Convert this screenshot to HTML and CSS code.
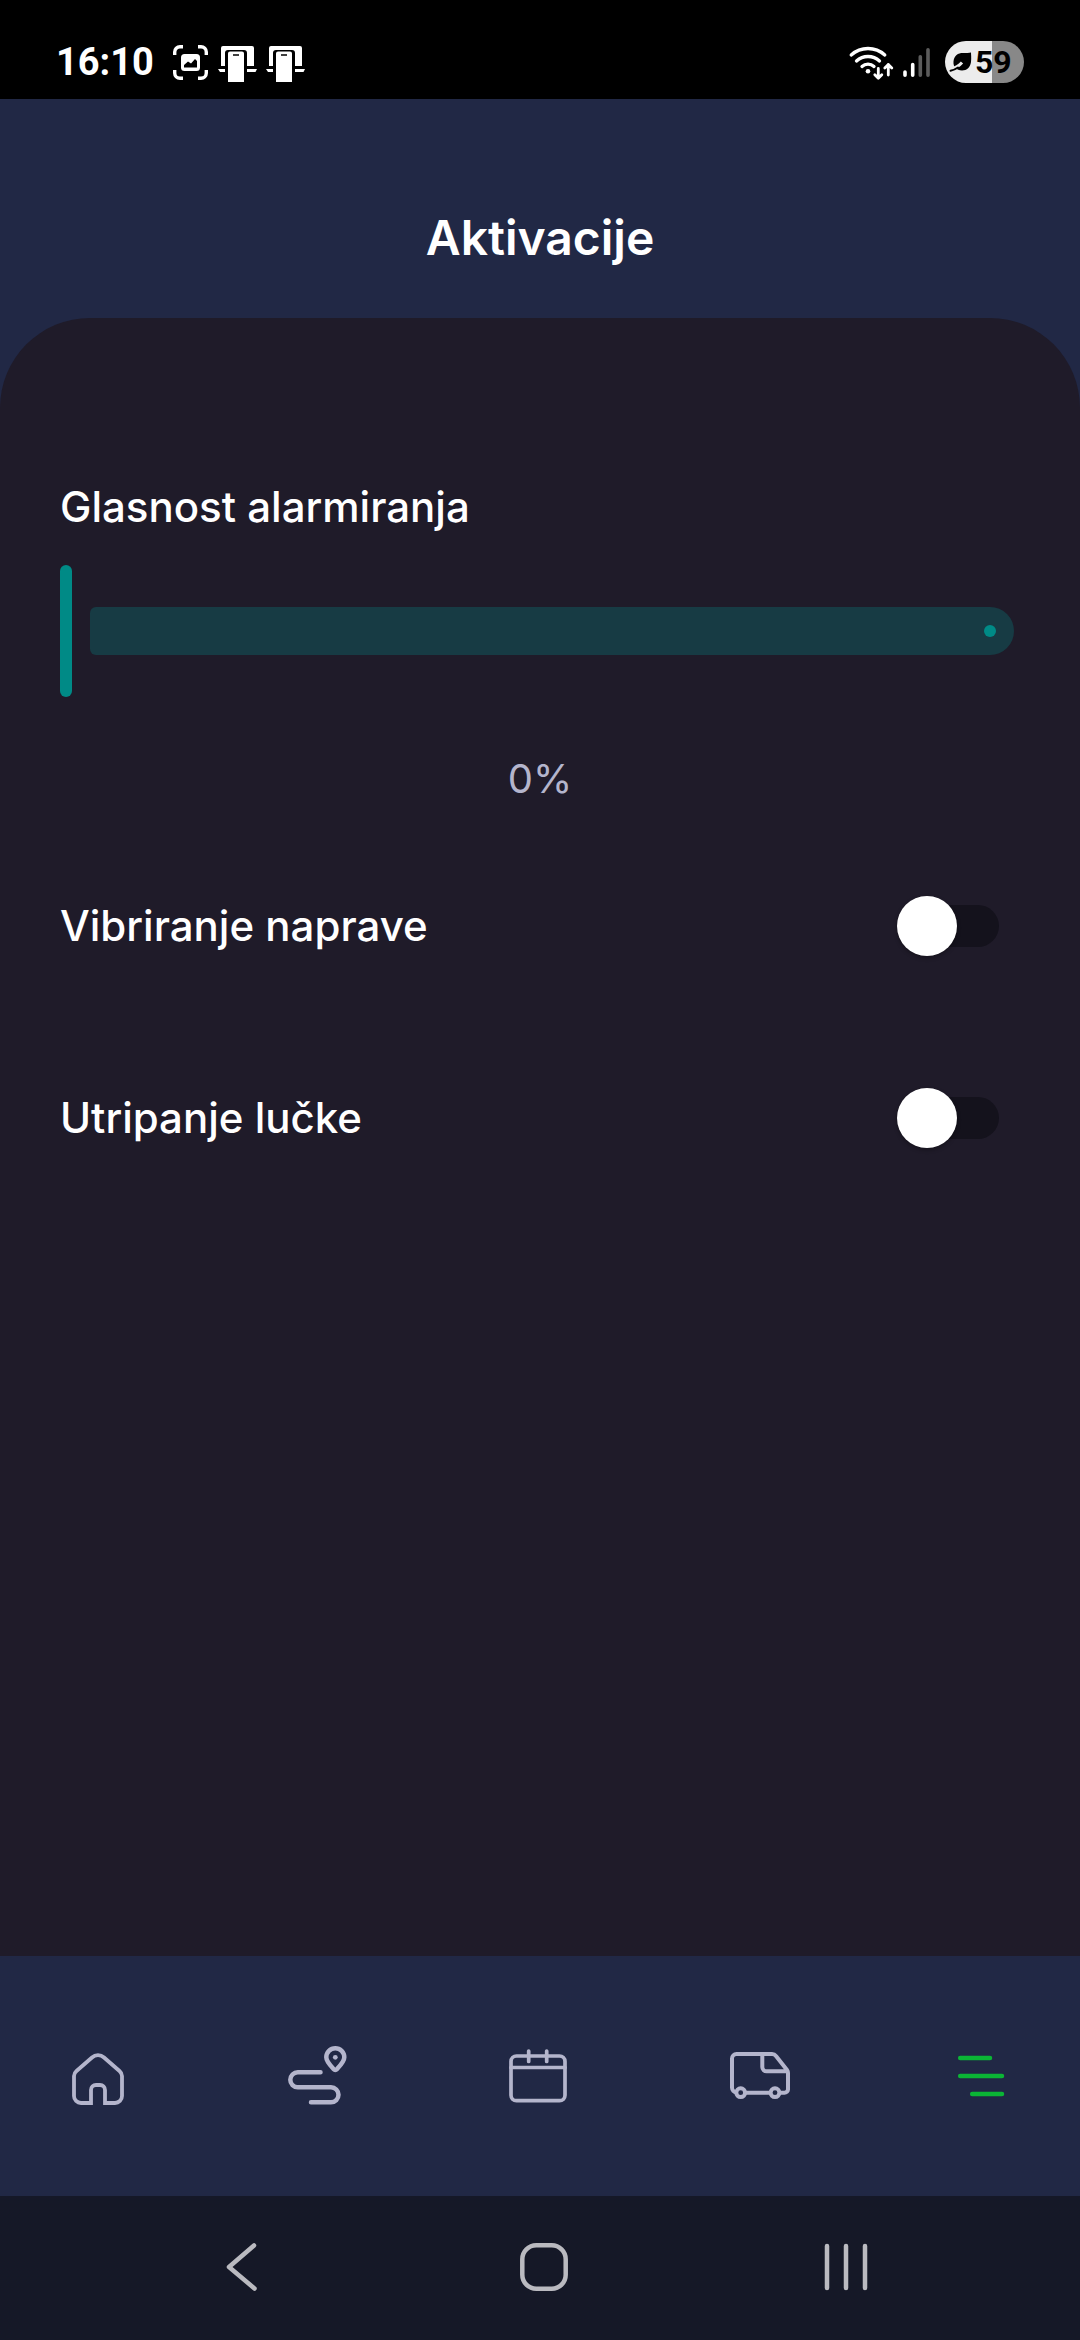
FILE: index.html
```html
<!DOCTYPE html>
<html lang="sl">
<head>
<meta charset="utf-8">
<meta name="viewport" content="width=device-width, initial-scale=1">
<title>Aktivacije</title>
<link rel="stylesheet" href="styles.css">
</head>
<body>
<div class="status-bar">
  <div class="status-left">
    <span class="clock">16:10</span>
    <svg class="status-icon" width="38" height="44" viewBox="0 0 38 44" aria-hidden="true">
      <g fill="none" stroke="#fff" stroke-width="3.4">
        <path d="M2.7 15V12a5.3 5.3 0 0 1 5.3-5.3h3M26 6.700h3a5.300 5.300 0 0 1 5.300 5.300v3M34.300 30v3a5.300 5.300 0 0 1-5.300 5.300h-3M11 38.300H8a5.300 5.300 0 0 1-5.300-5.300v-3"/>
      </g>
      <rect x="9" y="14" width="19" height="17" rx="3.500" fill="#fff"/>
      <path d="M12 27.500v-2.500l4-3.500 3 2 4-4.500 2 2v6.500z" fill="#000"/>
    </svg>
    <svg class="status-icon" width="40" height="44" viewBox="0 0 40 44" aria-hidden="true">
      <path d="M3 26V8a2 2 0 0 1 2-2h29a2 2 0 0 1 2 2v18h-7V13a3 3 0 0 0-3-3H10a3 3 0 0 0-3 3v13zM0 29h7v3H2zM29 29h10l-1.500 3H29zM10 13.500a2 2 0 0 1 2-2h12a2 2 0 0 1 2 2V42H10z" fill="#fff"/>
      <path d="M15 15h6" stroke="#000" stroke-width="1.500"/>
    </svg>
    <svg class="status-icon" width="40" height="44" viewBox="0 0 40 44" aria-hidden="true">
      <path d="M3 26V8a2 2 0 0 1 2-2h29a2 2 0 0 1 2 2v18h-7V13a3 3 0 0 0-3-3H10a3 3 0 0 0-3 3v13zM0 29h7v3H2zM29 29h10l-1.500 3H29zM10 13.500a2 2 0 0 1 2-2h12a2 2 0 0 1 2 2V42H10z" fill="#fff"/>
      <path d="M15 15h6" stroke="#000" stroke-width="1.500"/>
    </svg>
  </div>
  <div class="status-right">
    <svg class="status-icon" width="48" height="44" viewBox="0 0 48 44" aria-hidden="true">
      <g fill="none" stroke="#fff" stroke-width="3.300" stroke-linecap="round">
        <path d="M3.200 15a25 25 0 0 1 33.600 0M8.500 21a17 17 0 0 1 23 0M14 26.500a9 9 0 0 1 12 0"/>
      </g>
      <circle cx="20" cy="31.300" r="2.300" fill="#fff"/>
      <g fill="none" stroke-linecap="round" stroke-linejoin="round">
        <path d="M30.300 30v8" stroke="#000" stroke-width="6"/>
        <path d="M30.300 28.500v9.500M26.800 34.800l3.500 3.500 3.500-3.500M40.300 35V24.500M36.800 28l3.500-3.500 3.500 3.500" stroke="#fff" stroke-width="2.800"/>
      </g>
    </svg>
    <svg class="status-icon signal" width="32" height="44" viewBox="0 0 32 44" aria-hidden="true">
      <g stroke-width="3.600" stroke-linecap="round">
        <path d="M5 32v3.300M12.700 24.500v10.800" stroke="#fff"/>
        <path d="M20.300 16.800v18.500M28 9.800v25.500" stroke="#5c5c5c"/>
      </g>
    </svg>
    <div class="battery">
      <svg width="24" height="24" viewBox="0 0 24 24" aria-hidden="true">
        <path d="M22 2.500c0 2 .500 5 0 9.500-.700 5-4 8.500-9 8.500-5.500 0-9-3.500-8.500-9C5 5.500 9 3 14 3c3.500 0 6 0 8-.500z" fill="#000"/>
        <path d="M13 12.500C9.500 16.500 6 18 1.500 19.500" fill="none" stroke="#ececec" stroke-width="3"/>
        <path d="M9 17.500C6.500 19.200 4 20.300 1.500 20.800" fill="none" stroke="#000" stroke-width="2" stroke-linecap="round"/>
      </svg>
      <span>59</span>
    </div>
  </div>
</div>

<header class="header"><h1>Aktivacije</h1></header>

<main class="sheet">
  <label class="label" for="volume">Glasnost alarmiranja</label>
  <div class="slider">
    <span class="slider-track"></span>
    <input id="volume" type="range" min="0" max="100" value="0">
  </div>
  <output class="value" for="volume">0%</output>
  <div class="row">
    <label class="label" for="vibration">Vibriranje naprave</label>
    <input class="switch" id="vibration" type="checkbox" role="switch">
  </div>
  <div class="row">
    <label class="label" for="flash">Utripanje lučke</label>
    <input class="switch" id="flash" type="checkbox" role="switch">
  </div>
</main>

<nav class="tabs" aria-label="Meni">
  <a href="#home" aria-label="Domov">
    <svg viewBox="0 0 72 72" stroke-width="3.800"><path d="M29 63H19a7 7 0 0 1-7-7V36a7 7 0 0 1 2.500-5L30 17.500a9 9 0 0 1 12 0L57.500 31a7 7 0 0 1 2.500 5v20a7 7 0 0 1-7 7H43V50a5 5 0 0 0-5-5h-4a5 5 0 0 0-5 5z"/></svg>
  </a>
  <a href="#route" aria-label="Pot">
    <svg viewBox="0 0 72 72" stroke-width="4.500" stroke-linecap="round"><path d="M37.500 32.300H14.800a7.500 7.500 0 0 0 0 15H48a7.500 7.500 0 0 1 0 15H28M43.300 17.300a9 9 0 0 1 18 0c0 4.200-3.500 7.700-7.500 12a2 2 0 0 1-3 0c-4-4.300-7.500-7.800-7.500-12z"/><circle cx="52.300" cy="17.300" r="2.400" fill="currentColor" stroke="none"/></svg>
  </a>
  <a href="#calendar" aria-label="Koledar">
    <svg viewBox="0 0 72 72" stroke-width="3.700" stroke-linecap="round"><rect x="7" y="16" width="54" height="44.700" rx="5.500"/><path d="M7 27.500h54M24.700 11v10.500M42.700 11v10.500"/></svg>
  </a>
  <a href="#vehicle" aria-label="Vozilo">
    <svg viewBox="0 0 72 72" stroke-width="4"><path d="M11.500 52.500A5 5 0 0 1 7 47.500V18.500A4.500 4.500 0 0 1 11.500 14H47a5 5 0 0 1 4 2l11 14a5 5 0 0 1 1 3v16.500a3.500 3.500 0 0 1-3.500 3.200H54.500M20 52.700h25.500M37.300 14v13a4.300 4.300 0 0 0 4.300 4.300H62.500"/><circle cx="15.700" cy="52.700" r="4.400"/><circle cx="50" cy="52.700" r="4.400"/></svg>
  </a>
  <a class="active" href="#menu" aria-label="Več" aria-current="page">
    <svg viewBox="0 0 72 72" stroke-width="4.500" stroke-linecap="round"><path d="M14.200 18H44M14.200 36H56M26.200 54H56"/></svg>
  </a>
</nav>

<div class="system-nav">
  <button type="button" aria-label="Nazaj"><svg viewBox="0 0 48 48"><path d="M37 2.500 12 24l25.500 21.500"/></svg></button>
  <button type="button" aria-label="Domači zaslon"><svg viewBox="0 0 48 48"><rect x="2.300" y="2.300" width="43.400" height="43.400" rx="14"/></svg></button>
  <button type="button" aria-label="Nedavno"><svg viewBox="0 0 48 48"><path d="M5 3v42M24 3v42M43 3v42"/></svg></button>
</div>
</body>
</html>
```

FILE: styles.css
```css
* { box-sizing: border-box; }

body {
  margin: 0;
  min-height: 100vh;
  display: flex;
  flex-direction: column;
  background: #212845;
  color: #fff;
  font-family: "Inter", "Open Sans", sans-serif;
}

svg { display: block; flex: none; }

.status-bar {
  display: flex;
  justify-content: space-between;
  padding: 40px 56px 15px;
  background: #000;
  font-family: Roboto, sans-serif;
  font-weight: 700;
}
.status-left, .status-right { display: flex; align-items: center; }
.status-left { gap: 8px; }
.clock { width: 108px; font-size: 38px; line-height: 44px; }
.signal { margin: 0 13px 0 4px; }
.battery {
  display: flex;
  align-items: center;
  gap: 2px;
  width: 79px;
  height: 42px;
  padding-left: 4px;
  border-radius: 21px;
  background: linear-gradient(90deg, #ececec 59%, #888 59%);
  color: #000;
  font-size: 32px;
  line-height: 42px;
}

.header { padding: 109px 60px 50px; text-align: center; }
.header h1 { margin: 0; font-size: 48px; line-height: 60px; font-weight: 600; }

.sheet {
  flex: 1;
  display: flex;
  flex-direction: column;
  padding: 159px 66px 60px 60px;
  border-radius: 90px 90px 0 0;
  background: #1f1b29;
}
.label { font-size: 42px; line-height: 60px; font-weight: 500; }

.slider { display: grid; align-items: center; margin-top: 28px; }
.slider > * { grid-area: 1 / 1; }
.slider-track {
  display: flex;
  align-items: center;
  justify-content: flex-end;
  height: 48px;
  margin-left: 30px;
  padding-right: 18px;
  border-radius: 6px 24px 24px 6px;
  background: #173b44;
}
.slider-track::after {
  content: "";
  width: 12px;
  height: 12px;
  border-radius: 50%;
  background: #008a86;
}
.slider input {
  appearance: none;
  width: 100%;
  height: 132px;
  margin: 0;
  background: transparent;
}
.slider input::-webkit-slider-thumb {
  appearance: none;
  width: 12px;
  height: 132px;
  border-radius: 6px;
  background: #008a86;
}

.value {
  margin: 52px 0 87px;
  padding-left: 6px;
  text-align: center;
  font-size: 40px;
  line-height: 60px;
  color: #b4b5cc;
}

.row {
  display: flex;
  align-items: center;
  justify-content: space-between;
  height: 60px;
  margin-bottom: 132px;
  padding-right: 15px;
}
.row:last-child { margin-bottom: 0; }

.switch {
  appearance: none;
  position: relative;
  display: flex;
  align-items: center;
  width: 102px;
  height: 60px;
  margin: 0;
}
.switch::before {
  content: "";
  flex: 1;
  height: 42px;
  margin-left: 6px;
  border-radius: 21px;
  background: #14121c;
}
.switch::after {
  content: "";
  position: absolute;
  left: 0;
  width: 60px;
  height: 60px;
  border-radius: 50%;
  background: #fff;
  box-shadow: 0 2px 4px rgba(0, 0, 0, 0.3);
}
.switch:checked::after { left: auto; right: 0; }

.tabs {
  display: flex;
  align-items: center;
  justify-content: space-between;
  padding: 84px 62px;
}
.tabs a { color: #b4b5cc; }
.tabs .active { color: #0bb535; }
.tabs svg { width: 72px; height: 72px; fill: none; stroke: currentColor; }

.system-nav {
  display: flex;
  justify-content: space-between;
  padding: 47px 210px 49px 217px;
  background: #151827;
}
.system-nav button { padding: 0; border: 0; background: none; color: #babac0; }
.system-nav svg {
  width: 48px;
  height: 48px;
  fill: none;
  stroke: currentColor;
  stroke-width: 4.5;
  stroke-linecap: round;
  stroke-linejoin: round;
}
```
